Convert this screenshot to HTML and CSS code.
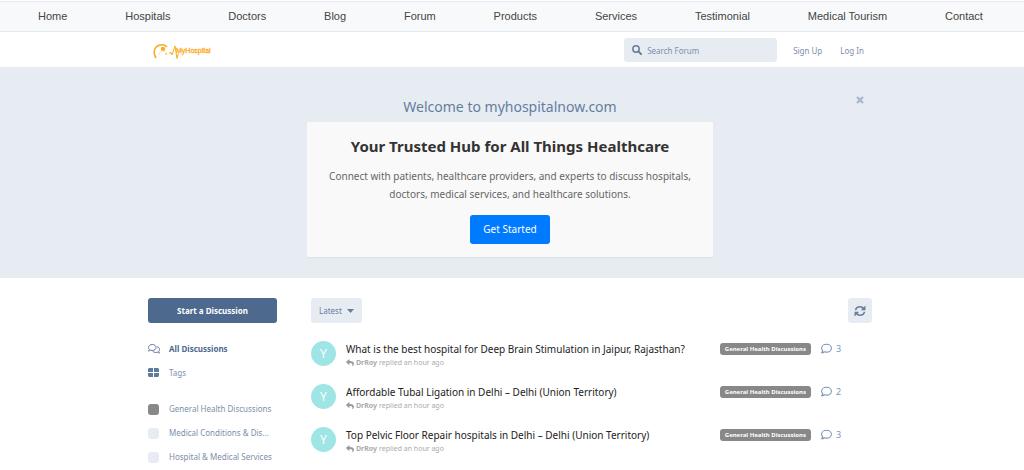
FILE: index.html
```html
<!DOCTYPE html>
<html lang="en">

<head>
  <meta charset="UTF-8">
  <meta name="viewport" content="width=device-width, initial-scale=1.0">
  <title>MyHospitalNow Forum</title>
  <link rel="stylesheet" href="styles.css">
</head>

<body>
  <!-- shared icons -->
  <svg width="0" height="0" class="sprite">
    <symbol id="icon-reply" viewBox="0 0 512 512">
      <path d="M8 176 184 24c15-13 40-3 40 18v80c160 2 288 34 288 186 0 61-39 122-83 154-14 10-33-3-28-19 45-145-22-184-177-186v88c0 21-24 31-40 18L8 212c-11-9-11-26 0-36z" />
    </symbol>
    <symbol id="icon-comment" viewBox="0 0 512 512">
      <path d="M256 56c125 0 228 80 228 184s-103 184-228 184c-34 0-67-6-96-17-30 24-76 49-132 49 33-37 50-71 54-98-34-33-54-74-54-118C28 136 131 56 256 56z" fill="none" stroke="currentColor" stroke-width="50" stroke-linejoin="round" />
    </symbol>
  </svg>

  <nav class="top-nav">
    <a href="#">Home</a>
    <a href="#">Hospitals</a>
    <a href="#">Doctors</a>
    <a href="#">Blog</a>
    <a href="#">Forum</a>
    <a href="#">Products</a>
    <a href="#">Services</a>
    <a href="#">Testimonial</a>
    <a href="#">Medical Tourism</a>
    <a href="#">Contact</a>
  </nav>

  <header class="header">
    <div class="container header-inner">
      <a href="#" class="logo" aria-label="MyHospital">
        <svg width="60" height="18" viewBox="0 0 60 18">
          <path d="M3.200 17C-.5 12 1 5.500 7 4c3-.7 5.500 0 7 2" fill="none" stroke="#fca91c" stroke-width="1.500" />
          <circle cx="10" cy="8" r="2.200" fill="#fca91c" />
          <path d="M6 14c1-3 2-4 4-4s3 1 4 3" fill="none" stroke="#fee3b5" stroke-width="1" />
          <path d="M12 13h2M16.500 13l1-2 1.500 3 3-9 2 12.500 1.500-5" fill="none" stroke="#fca91c" stroke-width="1" />
          <text x="23" y="12" class="logo-text">MyHospital</text>
        </svg>
      </a>
      <div class="header-controls">
        <div class="search">
          <svg class="search-icon" width="10" height="10" viewBox="0 0 20 20">
            <circle cx="8" cy="8" r="6.300" fill="none" stroke="currentColor" stroke-width="3" />
            <path d="m13 13 5.500 5.500" stroke="currentColor" stroke-width="3.600" stroke-linecap="round" />
          </svg>
          <input type="search" placeholder="Search Forum" aria-label="Search Forum">
        </div>
        <button type="button" class="link-btn">Sign Up</button>
        <button type="button" class="link-btn">Log In</button>
      </div>
    </div>
  </header>

  <section class="hero">
    <div class="container hero-inner">
      <button type="button" class="hero-close" aria-label="Close">
        <svg width="8" height="8" viewBox="0 0 8 8">
          <path d="m1 1 6 6M7 1 1 7" stroke="currentColor" stroke-width="2.200" />
        </svg>
      </button>
      <h2>Welcome to myhospitalnow.com</h2>
      <div class="hero-card">
        <h1>Your Trusted Hub for All Things Healthcare</h1>
        <p>Connect with patients, healthcare providers, and experts to discuss hospitals, doctors, medical services, and healthcare solutions.</p>
        <a href="#" class="btn-start">Get Started</a>
      </div>
    </div>
  </section>

  <div class="container content">
    <aside class="sidebar">
      <button type="button" class="btn-primary">Start a Discussion</button>
      <ul class="side-nav">
        <li>
          <a href="#" class="active">
            <svg width="12" height="11" viewBox="0 0 24 22" fill="none" stroke="currentColor" stroke-width="2" stroke-linejoin="round">
              <path d="M8.500 1C13 1 16 3.500 16 7s-3 6-7.500 6c-1.200 0-2.300-.2-3.300-.6C4 13.300 2.600 14 1 14c1-1.200 1.500-2.200 1.600-3.200C1.600 9.800 1 8.500 1 7c0-3.500 3-6 7.500-6z" />
              <path d="M18 5.500c3 .6 5 2.800 5 5.500 0 1.500-.6 2.800-1.600 3.800.1 1 .6 2 1.600 3.200-1.600 0-3-.7-4.200-1.600-1 .4-2.100.6-3.300.6-3 0-5.300-1.200-6.500-3" />
            </svg>
            <span>All Discussions</span>
          </a>
        </li>
        <li>
          <a href="#">
            <svg width="12" height="12" viewBox="0 0 12 12">
              <path d="M1 1h4v4H0V2zM6 1h4l1 1v3H6zM0 6h5v4H1L0 9zM6 6h5v3l-1 1H6z" fill="currentColor" />
            </svg>
            <span>Tags</span>
          </a>
        </li>
        <li class="group-start"><a href="#"><i class="swatch swatch-dark"></i><span>General Health Discussions</span></a></li>
        <li><a href="#"><i class="swatch"></i><span>Medical Conditions &amp; Dis...</span></a></li>
        <li><a href="#"><i class="swatch"></i><span>Hospital &amp; Medical Services</span></a></li>
      </ul>
    </aside>

    <main class="main">
      <div class="toolbar">
        <button type="button" class="btn-soft">
          Latest
          <svg width="7" height="4" viewBox="0 0 7 4"><path d="M0 0h7L3.500 4z" fill="currentColor" /></svg>
        </button>
        <button type="button" class="btn-soft btn-icon" aria-label="Refresh">
          <svg width="12" height="12" viewBox="0 0 24 24" fill="none" stroke="currentColor" stroke-width="3">
            <path d="M3 10.500C4 6 7.500 3.500 12 3.500c3 0 5.500 1.200 7.500 4M21 13.500c-1 4.500-4.500 7-9 7-3 0-5.500-1.200-7.500-4" />
            <path d="M23 1v9.500h-9.500zM1 23v-9.500h9.500z" fill="currentColor" stroke="none" />
          </svg>
        </button>
      </div>

      <ul class="discussions">
        <li>
          <span class="avatar">Y</span>
          <a href="#" class="topic">
            <h3>What is the best hospital for Deep Brain Stimulation in Jaipur, Rajasthan?</h3>
            <p><svg width="8" height="8"><use href="#icon-reply" /></svg><b>DrRoy</b> replied an hour ago</p>
          </a>
          <span class="tag">General Health Discussions</span>
          <span class="count"><svg width="11" height="11"><use href="#icon-comment" /></svg>3</span>
        </li>
        <li>
          <span class="avatar">Y</span>
          <a href="#" class="topic">
            <h3>Affordable Tubal Ligation in Delhi – Delhi (Union Territory)</h3>
            <p><svg width="8" height="8"><use href="#icon-reply" /></svg><b>DrRoy</b> replied an hour ago</p>
          </a>
          <span class="tag">General Health Discussions</span>
          <span class="count"><svg width="11" height="11"><use href="#icon-comment" /></svg>2</span>
        </li>
        <li>
          <span class="avatar">Y</span>
          <a href="#" class="topic">
            <h3>Top Pelvic Floor Repair hospitals in Delhi – Delhi (Union Territory)</h3>
            <p><svg width="8" height="8"><use href="#icon-reply" /></svg><b>DrRoy</b> replied an hour ago</p>
          </a>
          <span class="tag">General Health Discussions</span>
          <span class="count"><svg width="11" height="11"><use href="#icon-comment" /></svg>3</span>
        </li>
      </ul>
    </main>
  </div>
</body>

</html>
```
FILE: styles.css
```css
* {
  box-sizing: border-box;
}

body {
  margin: 0;
  font-family: "Noto Sans", "Open Sans", sans-serif;
  font-size: 8px;
  line-height: 12px;
  color: #426799;
  background-color: #fff;
}

a {
  color: inherit;
  text-decoration: none;
}

button,
input {
  font: inherit;
  color: inherit;
  border: none;
  cursor: pointer;
}

h1, h2, h3, p, ul {
  margin: 0;
  padding: 0;
  font-weight: normal;
}

ul {
  list-style: none;
}

svg {
  flex-shrink: 0;
}

.sprite {
  position: absolute;
}

.container {
  max-width: 728px;
  margin: 0 auto;
  padding-right: 4px;
}

/* top navigation */
.top-nav {
  display: flex;
  justify-content: space-between;
  margin-top: 1px;
  padding: 8px 41px 8px 38px;
  border-top: 1px solid #ebe6f5;
  border-bottom: 1px solid #e3e7ee;
  background-color: #f8f9fb;
  font-family: "Liberation Sans", Arial, sans-serif;
  font-size: 11px;
  line-height: 13px;
  color: #444;
}

/* header */
.header-inner {
  display: flex;
  justify-content: space-between;
  align-items: center;
  height: 35px;
}

.logo {
  display: flex;
  margin-left: 5px;
}

.logo-text {
  font: 7px "Liberation Sans", Arial, sans-serif;
  fill: #fca91c;
  stroke: #fca91c;
  stroke-width: 0.3;
}

.header-controls {
  display: flex;
  align-items: center;
  gap: 2px;
}

.search {
  display: flex;
  align-items: center;
  width: 153px;
  height: 24px;
  margin-right: 6px;
  padding-left: 8px;
  border-radius: 3px;
  background-color: #e7ecf3;
  color: #667c99;
}

.search input {
  width: 100%;
  padding: 2px 5px 0;
  background: none;
  outline: none;
}

.search input::placeholder {
  color: #7c90a9;
}

.link-btn {
  padding: 2px 8px 0;
  background: none;
  color: #7c90a9;
}

/* hero */
.hero {
  background-color: #e7ecf3;
  text-align: center;
}

.hero-inner {
  position: relative;
  padding-top: 29px;
  padding-bottom: 21px;
}

.hero-close {
  position: absolute;
  top: 25px;
  right: 8px;
  display: flex;
  padding: 4px;
  background: none;
  color: #a9b5cc;
}

.hero h2 {
  font-size: 14px;
  line-height: 22px;
  color: #667d9e;
}

.hero-card {
  max-width: 406px;
  margin: 4px auto 0;
  padding: 13px 14px;
  background-color: #f9f9f9;
  box-shadow: 0 1px 1px rgba(0, 0, 0, 0.04);
}

.hero-card h1 {
  font-size: 15px;
  font-weight: bold;
  line-height: 22px;
  color: #333;
}

.hero-card p {
  margin: 10px 0 12px;
  font-size: 10px;
  line-height: 18px;
  color: #666;
}

.btn-start {
  display: inline-block;
  padding: 7px 13px;
  border-radius: 3px;
  background-color: #007bff;
  font-size: 10px;
  line-height: 15px;
  color: #fff;
}

/* page body */
.content {
  display: flex;
  gap: 34px;
  padding-top: 20px;
}

.sidebar {
  flex: 0 0 129px;
  min-width: 0;
}

.btn-primary {
  width: 100%;
  height: 25px;
  border-radius: 3px;
  background-color: #4d698e;
  color: #fff;
  font-weight: bold;
}

.side-nav {
  margin-top: 14px;
  color: #7c90a9;
}

.side-nav a {
  display: flex;
  align-items: center;
  gap: 9px;
  height: 24px;
}

.side-nav svg {
  color: #5f7a9f;
}

.side-nav span {
  white-space: nowrap;
}

.side-nav .active {
  color: #4d698e;
  font-weight: bold;
}

.side-nav .group-start {
  margin-top: 12px;
}

.swatch {
  flex: 0 0 11px;
  height: 11px;
  margin-right: 1px;
  border-radius: 3px;
  background-color: #e7ecf3;
}

.swatch-dark {
  background-color: #888;
}

.main {
  flex: 1;
  min-width: 0;
}

.toolbar {
  display: flex;
  justify-content: space-between;
}

.btn-soft {
  display: flex;
  align-items: center;
  gap: 5px;
  height: 25px;
  padding: 0 8px;
  border-radius: 3px;
  background-color: #e7ecf3;
  color: #667d9e;
}

.btn-icon {
  padding: 0 6px;
}

/* discussion list */
.discussions {
  margin-top: 18px;
}

.discussions li {
  display: flex;
  align-items: flex-start;
  height: 43px;
}

.avatar {
  width: 25px;
  height: 25px;
  margin-right: 10px;
  border-radius: 50%;
  background-color: #a0e5e5;
  font-size: 12px;
  line-height: 25px;
  text-align: center;
  color: #fff;
}

.topic {
  flex: 1;
  min-width: 0;
  padding-top: 1px;
}

.topic h3 {
  font-size: 10px;
  line-height: 15px;
  color: #222;
}

.topic p {
  display: flex;
  align-items: center;
  gap: 2px;
  font-size: 7px;
  line-height: 12px;
  color: #aaa;
}

.topic svg {
  fill: #999;
}

.tag {
  margin-top: 2px;
  padding: 0 5px;
  border-radius: 3px;
  background-color: #888;
  font-size: 6px;
  font-weight: bold;
  line-height: 12px;
  color: #fff;
}

.count {
  display: flex;
  align-items: center;
  gap: 4px;
  width: 61px;
  padding-left: 10px;
  font-size: 9px;
  line-height: 15px;
  color: #7c94b5;
}
```
